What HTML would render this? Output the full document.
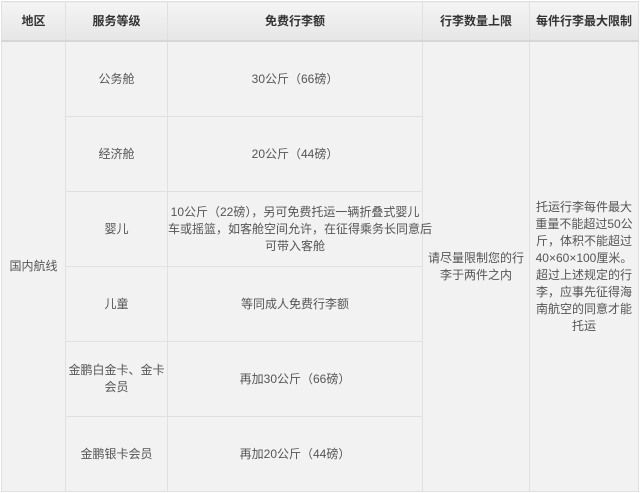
<!DOCTYPE html>
<html><head><meta charset="utf-8"><style>
html,body{margin:0;padding:0;background:#fff;}
body{width:640px;height:493px;position:relative;overflow:hidden;font-family:"Liberation Sans","Noto Sans CJK SC",sans-serif;}
table{position:absolute;left:1px;top:1px;border-collapse:collapse;table-layout:fixed;width:637px;}
td,th{border:1px solid #e0e0e0;background:#f2f2f2;color:#555;font-size:12px;text-align:center;vertical-align:middle;padding:0;line-height:17px;font-weight:normal;white-space:nowrap;}
th{height:38px;background:linear-gradient(#f4f4f4,#e6e6e6);color:#333;font-size:12px;font-weight:bold;border-bottom:2px solid #d6d6d6;}
tr.r td{height:74px;}
</style></head><body>
<table>
<colgroup><col style="width:64px"><col style="width:102px"><col style="width:255px"><col style="width:107px"><col style="width:109px"></colgroup>
<tr><th>地区</th><th>服务等级</th><th>免费行李额</th><th>行李数量上限</th><th>每件行李最大限制</th></tr>
<tr class="r"><td rowspan="6">国内航线</td><td>公务舱</td><td>30公斤（66磅）</td><td rowspan="6">请尽量限制您的行<br>李于两件之内</td><td rowspan="6">托运行李每件最大<br>重量不能超过50公<br>斤，体积不能超过<br>40×60×100厘米。<br>超过上述规定的行<br>李，应事先征得海<br>南航空的同意才能<br>托运</td></tr>
<tr class="r"><td>经济舱</td><td>20公斤（44磅）</td></tr>
<tr class="r"><td>婴儿</td><td>10公斤（22磅），另可免费托运一辆折叠式婴儿<br>车或摇篮，如客舱空间允许，在征得乘务长同意后<br>可带入客舱</td></tr>
<tr class="r"><td>儿童</td><td>等同成人免费行李额</td></tr>
<tr class="r"><td>金鹏白金卡、金卡<br>会员</td><td>再加30公斤（66磅）</td></tr>
<tr class="r"><td>金鹏银卡会员</td><td>再加20公斤（44磅）</td></tr>
</table>
</body></html>
